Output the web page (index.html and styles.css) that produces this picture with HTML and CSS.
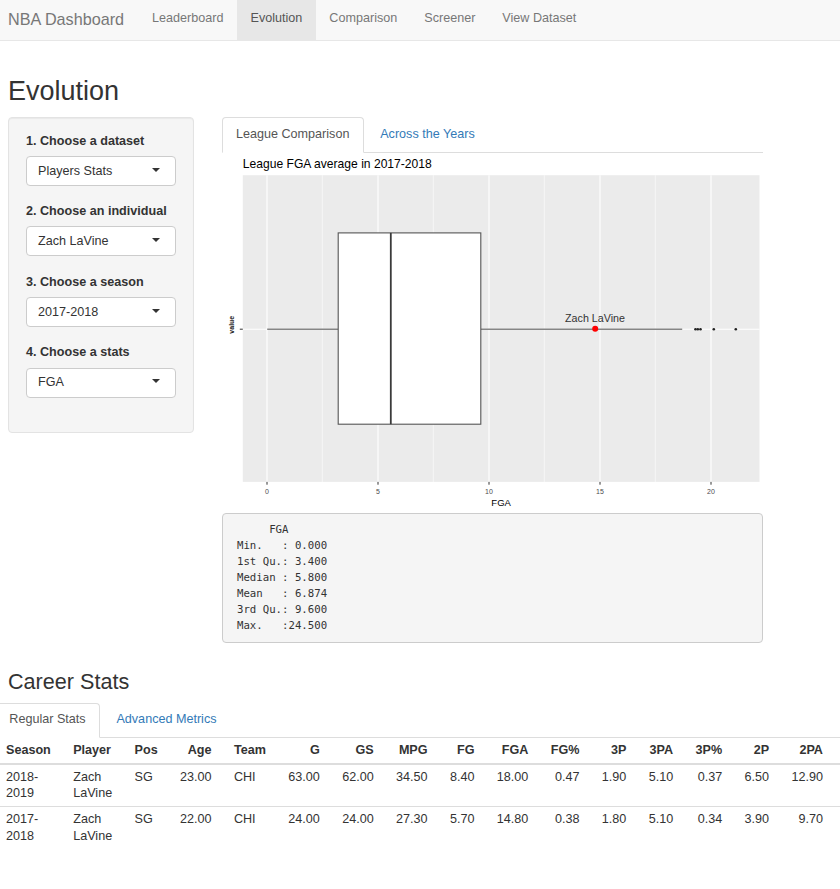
FILE: index.html
```html
<!DOCTYPE html>
<html lang="en">
<head>
<meta charset="utf-8">
<title>NBA Dashboard</title>
<link rel="stylesheet" href="styles.css">
</head>
<body>
<nav class="navbar">
  <span class="brand">NBA Dashboard</span>
  <ul class="nav">
    <li><a>Leaderboard</a></li>
    <li class="active"><a>Evolution</a></li>
    <li><a>Comparison</a></li>
    <li><a>Screener</a></li>
    <li><a>View Dataset</a></li>
  </ul>
</nav>
<div class="page">
  <h2 class="title">Evolution</h2>
  <div class="layout">
    <aside class="well">
      <div class="form-group">
        <label>1. Choose a dataset</label>
        <div class="select"><span class="select-text">Players Stats</span><i class="caret"></i></div>
      </div>
      <div class="form-group">
        <label>2. Choose an individual</label>
        <div class="select"><span class="select-text">Zach LaVine</span><i class="caret"></i></div>
      </div>
      <div class="form-group">
        <label>3. Choose a season</label>
        <div class="select"><span class="select-text">2017-2018</span><i class="caret"></i></div>
      </div>
      <div class="form-group">
        <label>4. Choose a stats</label>
        <div class="select"><span class="select-text">FGA</span><i class="caret"></i></div>
      </div>
    </aside>
    <main class="main">
      <ul class="tabs">
        <li class="active"><a>League Comparison</a></li>
        <li><a>Across the Years</a></li>
      </ul>
      <svg class="plot" viewBox="221.5 152.8 541.5 360.5" width="541.5" height="360.5" xmlns="http://www.w3.org/2000/svg">
        <text class="p-title" x="242.3" y="168.3">League FGA average in 2017-2018</text>
        <rect x="242.3" y="175" width="516.7" height="306.7" fill="#ebebeb"/>
        <g stroke="#ffffff" stroke-width="0.6">
          <line x1="321.8" x2="321.8" y1="175" y2="481.7"/>
          <line x1="432.8" x2="432.8" y1="175" y2="481.7"/>
          <line x1="543.8" x2="543.8" y1="175" y2="481.7"/>
          <line x1="654.8" x2="654.8" y1="175" y2="481.7"/>
        </g>
        <g stroke="#ffffff" stroke-width="1.1">
          <line x1="266.5" x2="266.5" y1="175" y2="481.7"/>
          <line x1="377.5" x2="377.5" y1="175" y2="481.7"/>
          <line x1="488.5" x2="488.5" y1="175" y2="481.7"/>
          <line x1="599.5" x2="599.5" y1="175" y2="481.7"/>
          <line x1="710.5" x2="710.5" y1="175" y2="481.7"/>
          <line x1="242.3" x2="759" y1="329" y2="329"/>
        </g>
        <g stroke="#858585" stroke-width="1.6">
          <line x1="266.7" x2="337.7" y1="329" y2="329"/>
          <line x1="480.3" x2="681.7" y1="329" y2="329"/>
        </g>
        <rect x="337.7" y="232.7" width="142.6" height="191.3" fill="#ffffff" stroke="#555555" stroke-width="1.1"/>
        <line x1="390.3" x2="390.3" y1="232.7" y2="424" stroke="#3a3a3a" stroke-width="1.8"/>
        <g fill="#222222">
          <circle cx="695" cy="329" r="1.3"/>
          <circle cx="697.3" cy="329" r="1.3"/>
          <circle cx="700" cy="329" r="1.3"/>
          <circle cx="713.3" cy="329" r="1.3"/>
          <circle cx="735.3" cy="329" r="1.3"/>
        </g>
        <circle cx="594.7" cy="328.6" r="3" fill="#ff0000"/>
        <text class="p-label" x="594.5" y="321.7">Zach LaVine</text>
        <g stroke="#333333" stroke-width="1">
          <line x1="239.3" x2="242.3" y1="329" y2="329"/>
          <line x1="266.5" x2="266.5" y1="481.7" y2="484.5"/>
          <line x1="377.5" x2="377.5" y1="481.7" y2="484.5"/>
          <line x1="488.5" x2="488.5" y1="481.7" y2="484.5"/>
          <line x1="599.5" x2="599.5" y1="481.7" y2="484.5"/>
          <line x1="710.5" x2="710.5" y1="481.7" y2="484.5"/>
        </g>
        <g class="p-tick">
          <text x="266.5" y="493.4">0</text>
          <text x="377.5" y="493.4">5</text>
          <text x="488.5" y="493.4">10</text>
          <text x="599.5" y="493.4">15</text>
          <text x="710.5" y="493.4">20</text>
        </g>
        <text class="p-axis" x="500.6" y="506.3">FGA</text>
        <text class="p-yaxis" transform="translate(233.6 324.5) rotate(-90)" x="0" y="0">value</text>
      </svg>
      <pre class="summary">     FGA
Min.   : 0.000
1st Qu.: 3.400
Median : 5.800
Mean   : 6.874
3rd Qu.: 9.600
Max.   :24.500</pre>
    </main>
  </div>
  <h3 class="section-title">Career Stats</h3>
</div>
<section class="career">
  <ul class="tabs tabs-career">
    <li class="active"><a>Regular Stats</a></li>
    <li><a>Advanced Metrics</a></li>
  </ul>
  <table class="stats">
    <thead>
      <tr>
        <th>Season</th><th>Player</th><th>Pos</th><th class="num">Age</th><th>Team</th>
        <th class="num">G</th><th class="num">GS</th><th class="num">MPG</th><th class="num">FG</th><th class="num">FGA</th>
        <th class="num">FG%</th><th class="num">3P</th><th class="num">3PA</th><th class="num">3P%</th><th class="num">2P</th>
        <th class="num">2PA</th><th class="filler"></th>
      </tr>
    </thead>
    <tbody>
      <tr>
        <td>2018-<wbr>2019</td><td>Zach LaVine</td><td>SG</td><td class="num">23.00</td><td>CHI</td>
        <td class="num">63.00</td><td class="num">62.00</td><td class="num">34.50</td><td class="num">8.40</td><td class="num">18.00</td>
        <td class="num">0.47</td><td class="num">1.90</td><td class="num">5.10</td><td class="num">0.37</td><td class="num">6.50</td>
        <td class="num">12.90</td><td class="filler"></td>
      </tr>
      <tr>
        <td>2017-<wbr>2018</td><td>Zach LaVine</td><td>SG</td><td class="num">22.00</td><td>CHI</td>
        <td class="num">24.00</td><td class="num">24.00</td><td class="num">27.30</td><td class="num">5.70</td><td class="num">14.80</td>
        <td class="num">0.38</td><td class="num">1.80</td><td class="num">5.10</td><td class="num">0.34</td><td class="num">3.90</td>
        <td class="num">9.70</td><td class="filler"></td>
      </tr>
    </tbody>
  </table>
</section>
</body>
</html>
```

FILE: styles.css
```css
* {
  box-sizing: border-box;
}

html,
body {
  margin: 0;
  padding: 0;
}

body {
  font-family: "Liberation Sans", Arial, sans-serif;
  font-size: 12.6px;
  line-height: 16.6px;
  color: #333333;
  background: #ffffff;
  overflow: hidden;
}

/* ---------- navbar ---------- */
.navbar {
  display: flex;
  align-items: flex-start;
  height: 41px;
  background: #f8f8f8;
  border-bottom: 1px solid #e7e7e7;
}

.brand {
  padding: 9.3px 14.5px 0 8px;
  font-size: 16.2px;
  line-height: 20px;
  color: #777777;
}

.nav {
  display: flex;
  list-style: none;
  margin: 0;
  padding: 0;
}

.nav a {
  display: block;
  height: 40px;
  padding: 8.3px 13.5px 0;
  line-height: 20px;
  color: #777777;
}

.nav .active a {
  background: #e7e7e7;
  color: #555555;
}

/* ---------- page ---------- */
.page {
  padding: 0 0 0 8px;
}

.title {
  margin: 35.8px 0 10.2px;
  font-size: 27px;
  line-height: 29.7px;
  font-weight: normal;
  color: #333333;
}

.layout {
  display: flex;
  align-items: flex-start;
  gap: 27.5px;
}

/* ---------- sidebar ---------- */
.well {
  width: 186px;
  padding: 15px 17px 17px;
  background: #f5f5f5;
  border: 1px solid #e3e3e3;
  border-radius: 4px;
  box-shadow: inset 0 1px 1px rgba(0, 0, 0, 0.05);
}

.form-group {
  margin-bottom: 17.4px;
}

.form-group label {
  display: block;
  margin-bottom: 6.6px;
  font-weight: bold;
}

.select {
  display: flex;
  align-items: center;
  height: 30px;
  padding: 0 15.5px 0 11px;
  background: #ffffff;
  border: 1px solid #cccccc;
  border-radius: 4px;
  color: #333333;
}

.select-text {
  flex: 1;
}

.caret {
  width: 0;
  height: 0;
  margin-bottom: 2.6px;
  border-top: 4px solid #333333;
  border-left: 4.2px solid transparent;
  border-right: 4.2px solid transparent;
}

/* ---------- main ---------- */
.main {
  width: 541.5px;
}

.tabs {
  display: flex;
  list-style: none;
  margin: 0;
  padding: 0;
  border-bottom: 1px solid #dddddd;
}

.tabs li {
  margin: 0 1.8px -1px 0;
}

.tabs a {
  display: block;
  height: 36px;
  padding: 0 13.5px;
  line-height: 33px;
  border: 1px solid transparent;
  border-radius: 4px 4px 0 0;
  color: #337ab7;
}

.tabs .active a {
  background: #ffffff;
  border-color: #dddddd #dddddd transparent;
  color: #555555;
}

.tabs-career a {
  height: 35px;
  line-height: 31px;
}

.plot {
  display: block;
}

.p-title {
  font-family: "Liberation Sans", Arial, sans-serif;
  font-size: 12.1px;
  fill: #000000;
}

.p-label {
  font-family: "Liberation Sans", Arial, sans-serif;
  font-size: 10.7px;
  fill: #333333;
  text-anchor: middle;
}

.p-tick text {
  font-family: "Liberation Sans", Arial, sans-serif;
  font-size: 7px;
  fill: #4d4d4d;
  text-anchor: middle;
}

.p-axis {
  font-family: "Liberation Sans", Arial, sans-serif;
  font-size: 9.5px;
  fill: #000000;
  text-anchor: middle;
}

.p-yaxis {
  font-family: "Liberation Sans", Arial, sans-serif;
  font-size: 7px;
  font-weight: bold;
  fill: #222222;
  text-anchor: middle;
}

.summary {
  margin: 0;
  padding: 8px 14.5px;
  font-family: "DejaVu Sans Mono", "Liberation Mono", monospace;
  font-size: 10.7px;
  line-height: 16px;
  color: #333333;
  background: #f5f5f5;
  border: 1px solid #cccccc;
  border-radius: 4px;
}

.section-title {
  margin: 27.3px 0 8.9px;
  font-size: 21.6px;
  line-height: 23.8px;
  font-weight: normal;
  color: #333333;
}

/* ---------- career table ---------- */
.career {
  margin-left: -5.2px;
  width: calc(100% + 5.2px);
  overflow: hidden;
}

.stats {
  width: 1px;
  border-collapse: collapse;
}

.stats th,
.stats td {
  padding: 4px 11.2px;
  line-height: 16.6px;
  text-align: left;
  vertical-align: top;
}

.stats th {
  font-weight: bold;
  border-bottom: 2px solid #dddddd;
  white-space: nowrap;
}

.stats tbody tr + tr td {
  border-top: 1px solid #dddddd;
}

.stats .num {
  text-align: right;
}

.stats .filler {
  min-width: 40px;
  padding: 0 20px;
}
```
